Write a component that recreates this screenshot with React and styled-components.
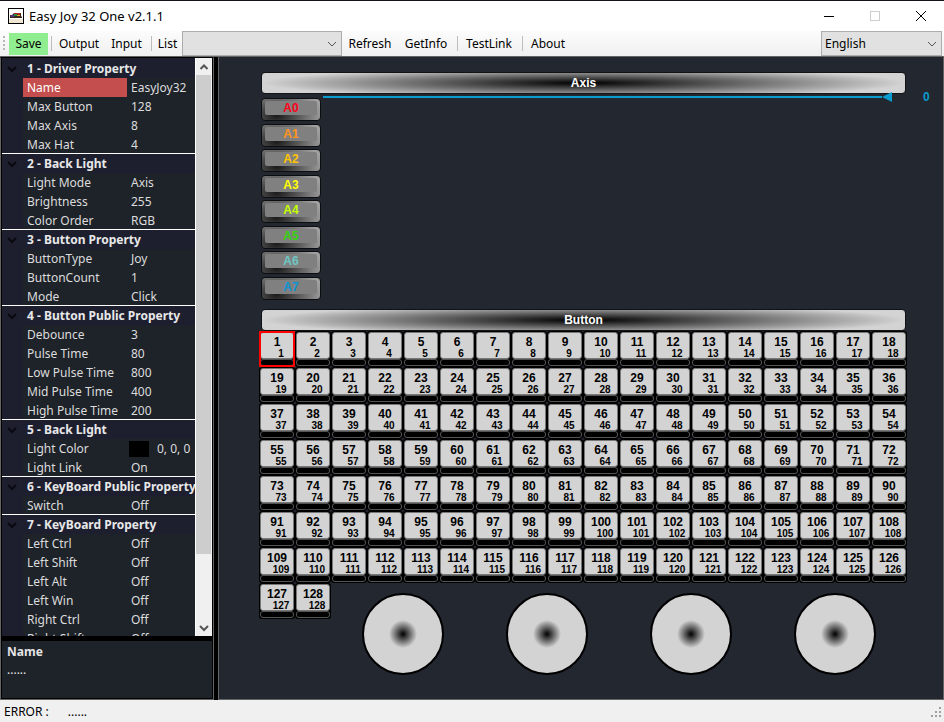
import React from "react";
import styled, { createGlobalStyle } from "styled-components";

const uiFont = '"Noto Sans", "Open Sans", sans-serif';
const keyFont = '"Liberation Sans", Arial, sans-serif';

const GlobalStyle = createGlobalStyle`
  *, *::before, *::after { box-sizing: border-box; }
  body { margin: 0; font: 12px/18px ${uiFont}; color: #000; }
  button, select { font: inherit; color: inherit; margin: 0; border: 0; border-radius: 0; }
`;

const Window = styled.div`
  display: flex;
  flex-direction: column;
  height: 100vh;
  background: #f0f0f0;
  overflow: hidden;
`;

const TitleBar = styled.header`
  display: flex;
  align-items: center;
  flex: none;
  height: 31px;
  padding-left: 8px;
  border-top: 1px solid #15121a;
  background: #fff;
`;

const Title = styled.h1`
  flex: 1;
  margin: 0 0 0 5px;
  font-size: 13px;
  line-height: 18px;
  font-weight: 400;
`;

const CaptionButton = styled.button`
  display: grid;
  place-items: center;
  width: 46px;
  height: 30px;
  padding: 0;
  background: transparent;
`;

const Toolbar = styled.nav`
  display: flex;
  align-items: center;
  flex: none;
  height: 25px;
  padding: 0 2px 0 3px;
  background: linear-gradient(#fcfcfc, #f0f0f0);
`;

const Grip = styled.span`
  width: 2px;
  height: 16px;
  margin-right: 4px;
  background: repeating-linear-gradient(#b8b8b8 0 2px, transparent 2px 4px);
`;

const ToolButton = styled.button`
  width: ${(p) => p.$width}px;
  height: 22px;
  padding: 0;
  text-align: center;
  white-space: nowrap;
  background: ${(p) => (p.$primary ? "#90ee90" : "transparent")};
`;

const ToolLabel = styled.label`
  width: 29px;
  text-align: center;
`;

const Divider = styled.span`
  width: 1px;
  height: 15px;
  margin: 0 1px 0 3px;
  background: #bdbdbd;
`;

const Spacer = styled.span`
  flex: 1;
`;

const Combo = styled.span`
  display: grid;
  grid-template-columns: 1fr 18px;
  align-items: center;
  width: ${(p) => p.$width}px;
  height: 25px;
  border: 1px solid #adadad;
  background: #e1e1e1;

  select {
    grid-area: 1 / 1 / 2 / 3;
    height: 23px;
    padding: 0 18px 0 3px;
    appearance: none;
    background: transparent;
  }

  svg {
    grid-area: 1 / 2;
    justify-self: center;
    pointer-events: none;
  }
`;

const Body = styled.main`
  display: flex;
  flex: 1;
  min-height: 0;
  border-top: 1px solid #646464;
`;

const Sidebar = styled.aside`
  display: flex;
  flex-direction: column;
  flex: none;
  width: 214px;
  border: 1px solid #646464;
  border-top-color: #000;
  padding: 0 1px 1px;
  background: #000;
`;

const PropertyArea = styled.div`
  display: flex;
  flex: 1;
  min-height: 0;
  background: #1e2229;
`;

const PropertyScroll = styled.div`
  flex: 1;
  overflow: hidden;
  padding-top: 1px;
  background: #1d1f2f;
`;

const PropertyTable = styled.table`
  width: 100%;
  table-layout: fixed;
  border-collapse: separate;
  border-spacing: 0;
  color: #dcdcdc;

  th, td {
    height: 19px;
    padding: 0;
    line-height: 16px;
    text-align: left;
    vertical-align: top;
    font-weight: 400;
    white-space: nowrap;
    overflow: hidden;
  }
`;

const Group = styled.tbody`
  tr:last-child > * {
    border-bottom: 1px solid #fff;
  }
`;

const GroupToggle = styled.button`
  display: flex;
  align-items: center;
  width: 100%;
  height: 19px;
  padding: 0 0 0 5px;
  gap: 10px;
  font-weight: 700;
  color: #e8e8e8;
  background: transparent;
  white-space: nowrap;

  svg { flex: none; }
`;

const IndentCol = styled.col`
  width: 21px;
`;

const NameCol = styled.col`
  width: 104px;
`;

const NameCell = styled.th`
  && {
    padding: 2px 0 0 4px;
    color: ${(p) => (p.$selected ? "#fff" : "inherit")};
    background: ${(p) => (p.$selected ? "#c44d4d" : "#1e2229")};
  }
`;

const ValueCell = styled.td`
  && {
    padding: 2px 0 0 ${(p) => (p.$swatch ? 2 : 4)}px;
    background: #1e2229;
  }
`;

const ColorValue = styled.span`
  display: flex;
  align-items: center;
  gap: 8px;
`;

const Swatch = styled.span`
  width: 20px;
  height: 16px;
  background: #000;
`;

const ScrollBar = styled.div`
  display: flex;
  flex-direction: column;
  flex: none;
  width: 17px;
  background: #f0f0f0;
  border-left: 1px solid #fff;
`;

const ScrollButton = styled.button`
  display: grid;
  place-items: center;
  height: 17px;
  padding: 0;
  background: transparent;
`;

const ScrollTrack = styled.div`
  flex: 1;
`;

const ScrollThumb = styled.div`
  width: 15px;
  height: 88%;
  background: #cdcdcd;
`;

const Description = styled.section`
  flex: none;
  height: 57px;
  margin-top: 5px;
  padding: 2px 5px;
  color: #e4e4e4;
  background: #1e2229;
`;

const DescriptionTitle = styled.h2`
  margin: 0;
  font-size: 12px;
  line-height: 18px;
`;

const DescriptionText = styled.p`
  margin: 0;
`;

const Splitter = styled.div`
  flex: none;
  width: 4px;
  background: #000;
`;

const Canvas = styled.section`
  flex: 1;
  min-width: 0;
  padding-top: 15px;
  border: 1px solid #646464;
  border-top: 0;
  background: #23272f;
  font-family: ${keyFont};
  overflow: hidden;
`;

const Banner = styled.h2`
  height: 22px;
  margin: 0 37px 0 42px;
  border: 1px solid #111317;
  border-radius: 4px;
  background: radial-gradient(ellipse 50% 75% at center, #000, #d3d3d3);
  color: #fff;
  font-size: 12px;
  line-height: 20px;
  text-align: center;
`;

const AxisPanel = styled.div`
  display: flex;
  align-items: flex-start;
  margin-left: 42px;
`;

const AxisList = styled.div`
  display: flex;
  flex-direction: column;
  justify-content: space-between;
  flex: none;
  width: 60px;
  height: 215px;
  padding: 4px 0 9px;
`;

const AxisButton = styled.button`
  display: flex;
  align-items: flex-start;
  height: 23px;
  padding: 2px 3px;
  border: 1px solid #0c0d10;
  border-radius: 4px;
  background: radial-gradient(ellipse 80% 130% at 25% 80%, #1a1a1a, #5c5c5c 50%, #a0a0a0);
`;

const AxisFace = styled.span`
  flex: 1;
  height: 14px;
  border-radius: 2px;
  background: #808080;
  color: ${(p) => p.$color};
  font: 700 12px/14px ${keyFont};
  text-align: center;
`;

const AxisTrack = styled.div`
  display: flex;
  align-items: center;
  flex: 1;
  height: 6px;
  margin-left: 2px;
`;

const AxisLine = styled.span`
  flex: 1;
  height: 2px;
  background: #0b9ccf;
`;

const AxisValue = styled.output`
  width: 51px;
  padding-left: 31px;
  color: #0b9ccf;
  font-size: 12px;
  font-weight: 700;
  line-height: 6px;
`;

const KeyGrid = styled.div`
  display: grid;
  grid-template-columns: repeat(18, minmax(0, 1fr));
  grid-auto-rows: 36px;
  margin: 0 36px 0 40px;
`;

const Key = styled.button`
  display: flex;
  flex-direction: column;
  padding: 1px;
  border-radius: ${(p) => (p.$selected ? 0 : 3)}px;
  background: #000;
  outline: ${(p) => (p.$selected ? "2px solid #f00" : "none")};
  outline-offset: -2px;
`;

const KeyFace = styled.span`
  display: flex;
  flex-direction: column;
  align-items: center;
  flex: none;
  width: 100%;
  height: 27px;
  padding-top: 1px;
  border: 1px solid #777;
  border-radius: 3px;
  background: #d3d3d3;
  font: 700 10px/7px ${keyFont};
  color: #000;

  strong {
    font-size: 12px;
    line-height: 16px;
  }

  small {
    padding-left: 8px;
    font-size: 10px;
  }
`;

const KeyLamp = styled.span`
  flex: none;
  width: 100%;
  height: 7px;
  border: 1px solid #555;
  border-radius: 3px;
  background: #000;
`;

const Hat = styled.div`
  grid-row: 8 / span 3;
  grid-column: ${(p) => p.$column} / span 4;
  justify-self: center;
  width: 82px;
  height: 82px;
  margin-top: 10px;
  border: 2px solid #000;
  border-radius: 50%;
  background: radial-gradient(circle at center, #000 0, #d3d3d3 14px);
`;

const StatusBar = styled.footer`
  display: flex;
  align-items: center;
  flex: none;
  height: 22px;
  padding: 2px 2px 0 4px;
  gap: 19px;
`;

const StatusText = styled.span`
  flex: 1;
`;

function AppIcon() {
  return (
    <svg width="16" height="16" viewBox="0 0 16 16" aria-hidden="true">
      <rect x="0.5" y="0.5" width="15" height="15" fill="#fff" stroke="#000" />
      <path d="M1 11h14v4H1z" fill="#efe6d2" />
      <path d="M2 9V7h2l2-2h7v3l1 1v1H2z" fill="#3b2a1b" />
      <path d="M6 5h6v1H6z" fill="#b3262d" />
      <path d="M3 7h3v2H3z" fill="#56308f" />
      <path d="M6 6h3v2H6z" fill="#1e8a3c" />
      <path d="M9 7h3v1H9z" fill="#e0b020" />
      <path d="M10 6h2v1h-2z" fill="#b3262d" />
    </svg>
  );
}

function Chevron({ color = "#555", up = false, width = 1 }) {
  return (
    <svg width="10" height="8" viewBox="0 0 10 8" fill="none" aria-hidden="true">
      <path d={up ? "M1.5 6 5 2.5 8.5 6" : "M1 2l4 4 4-4"} stroke={color} strokeWidth={width} />
    </svg>
  );
}

const groups = [
  ["1 - Driver Property", [["Name", "EasyJoy32"], ["Max Button", "128"], ["Max Axis", "8"], ["Max Hat", "4"]]],
  ["2 - Back Light", [["Light Mode", "Axis"], ["Brightness", "255"], ["Color Order", "RGB"]]],
  ["3 - Button Property", [["ButtonType", "Joy"], ["ButtonCount", "1"], ["Mode", "Click"]]],
  ["4 - Button Public Property", [["Debounce", "3"], ["Pulse Time", "80"], ["Low Pulse Time", "800"], ["Mid Pulse Time", "400"], ["High Pulse Time", "200"]]],
  ["5 - Back Light", [["Light Color", "0, 0, 0", true], ["Light Link", "On"]]],
  ["6 - KeyBoard Public Property", [["Switch", "Off"]]],
  ["7 - KeyBoard Property", [["Left Ctrl", "Off"], ["Left Shift", "Off"], ["Left Alt", "Off"], ["Left Win", "Off"], ["Right Ctrl", "Off"], ["Right Shift", "Off"]]],
];

const axisColors = ["#ff0018", "#ff9420", "#ffc400", "#ffff00", "#c4ff00", "#33d60a", "#6cc8c4", "#0b94d4"];
const keys = Array.from({ length: 128 }, (_, i) => i + 1);
const hatColumns = [3, 7, 11, 15];

function Properties() {
  return (
    <PropertyTable>
      <colgroup>
        <IndentCol />
        <NameCol />
        <col />
      </colgroup>
      {groups.map(([title, rows]) => (
        <Group key={title}>
          <tr>
            <th colSpan={3}>
              <GroupToggle type="button" aria-expanded="true">
                <Chevron color="#090a10" width={2} />
                {title}
              </GroupToggle>
            </th>
          </tr>
          {rows.map(([name, value, swatch]) => (
            <tr key={name}>
              <td />
              <NameCell scope="row" $selected={name === "Name"}>{name}</NameCell>
              <ValueCell $swatch={swatch}>
                {swatch ? <ColorValue><Swatch />{value}</ColorValue> : value}
              </ValueCell>
            </tr>
          ))}
        </Group>
      ))}
    </PropertyTable>
  );
}

export default function App() {
  return (
    <Window>
      <GlobalStyle />
      <TitleBar>
        <AppIcon />
        <Title>Easy Joy 32 One v2.1.1</Title>
        <CaptionButton type="button" aria-label="Minimize">
          <svg width="10" height="10"><path d="M0 5.5h10" stroke="#000" /></svg>
        </CaptionButton>
        <CaptionButton type="button" aria-label="Maximize" disabled>
          <svg width="10" height="10"><rect x="0.5" y="0.5" width="9" height="9" fill="none" stroke="#ccc" /></svg>
        </CaptionButton>
        <CaptionButton type="button" aria-label="Close">
          <svg width="10" height="10"><path d="M0 0l10 10M10 0L0 10" stroke="#000" /></svg>
        </CaptionButton>
      </TitleBar>

      <Toolbar>
        <Grip />
        <ToolButton type="button" $primary $width={39}>Save</ToolButton>
        <Divider />
        <ToolButton type="button" $width={52}>Output</ToolButton>
        <ToolButton type="button" $width={43}>Input</ToolButton>
        <Divider />
        <ToolLabel htmlFor="device">List</ToolLabel>
        <Combo $width={160}>
          <select id="device" />
          <Chevron />
        </Combo>
        <ToolButton type="button" $width={56}>Refresh</ToolButton>
        <ToolButton type="button" $width={56}>GetInfo</ToolButton>
        <Divider />
        <ToolButton type="button" $width={60}>TestLink</ToolButton>
        <Divider />
        <ToolButton type="button" $width={48}>About</ToolButton>
        <Spacer />
        <Combo $width={121}>
          <select aria-label="Language" defaultValue="English">
            <option>English</option>
          </select>
          <Chevron />
        </Combo>
      </Toolbar>

      <Body>
        <Sidebar>
          <PropertyArea>
            <PropertyScroll><Properties /></PropertyScroll>
            <ScrollBar>
              <ScrollButton type="button" aria-label="Scroll up"><Chevron up width={2} /></ScrollButton>
              <ScrollTrack><ScrollThumb /></ScrollTrack>
              <ScrollButton type="button" aria-label="Scroll down"><Chevron width={2} /></ScrollButton>
            </ScrollBar>
          </PropertyArea>
          <Description>
            <DescriptionTitle>Name</DescriptionTitle>
            <DescriptionText>......</DescriptionText>
          </Description>
        </Sidebar>
        <Splitter />
        <Canvas>
          <Banner>Axis</Banner>
          <AxisPanel>
            <AxisList>
              {axisColors.map((color, i) => (
                <AxisButton key={color} type="button"><AxisFace $color={color}>A{i}</AxisFace></AxisButton>
              ))}
            </AxisList>
            <AxisTrack>
              <AxisLine />
              <svg width="10" height="10" aria-hidden="true"><path d="M0 5 10 0v10z" fill="#0b9ccf" /></svg>
            </AxisTrack>
            <AxisValue>0</AxisValue>
          </AxisPanel>
          <Banner>Button</Banner>
          <KeyGrid>
            {keys.map((n) => (
              <Key key={n} type="button" $selected={n === 1}>
                <KeyFace><strong>{n}</strong><small>{n}</small></KeyFace>
                <KeyLamp />
              </Key>
            ))}
            {hatColumns.map((column) => <Hat key={column} $column={column} />)}
          </KeyGrid>
        </Canvas>
      </Body>

      <StatusBar>
        <span>ERROR :</span>
        <StatusText>......</StatusText>
        <svg width="11" height="11" viewBox="0 0 11 11" fill="#a0a0a0" aria-hidden="true">
          <path d="M8 0h2v2H8zM4 4h2v2H4zM8 4h2v2H8zM0 8h2v2H0zM4 8h2v2H4zM8 8h2v2H8z" />
        </svg>
      </StatusBar>
    </Window>
  );
}
